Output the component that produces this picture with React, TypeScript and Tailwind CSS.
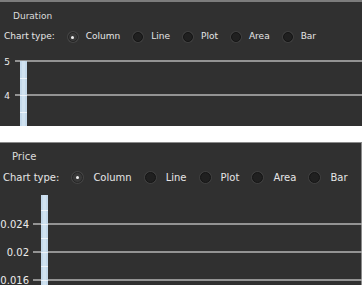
import React from "react";

const types = ["Column", "Line", "Plot", "Area", "Bar"];

function Radio({ checked, size }: { checked?: boolean; size: string }) {
  return (
    <span
      className={`${size} flex items-center justify-center rounded-full border shrink-0 ${
        checked
          ? "border-[#252525] bg-[#393939] shadow-[0_0_0_1px_#444]"
          : "border-[#151515] bg-[#202020] shadow-[0_0_0_1px_#3e3e3e]"
      }`}
    >
      {checked && <span className="w-[3px] h-[3px] rounded-full bg-[#f0f0f0]" />}
    </span>
  );
}

function Chart({
  height,
  labelRight,
  lineStart,
  barX,
  barTop,
  grid,
}: {
  height: number;
  labelRight: number;
  lineStart: number;
  barX: number;
  barTop: number;
  grid: { y: number; label: string }[];
}) {
  const step = grid.length > 1 ? grid[1].y - grid[0].y : 30;
  const stripes: number[] = [];
  for (let y = grid[0].y - step * 2; y < height; y += step / 2) {
    if (y > barTop + 2) stripes.push(Math.round(y));
  }
  return (
    <svg width={362} height={height} className="block">
      {grid.map((g) => (
        <g key={g.label}>
          <line x1={lineStart} x2={362} y1={g.y} y2={g.y} stroke="#b4b4b4" strokeWidth={1.5} />
          <text
            x={labelRight}
            y={g.y + 3.5}
            textAnchor="end"
            fill="#ececec"
            fontSize="inherit"
            fontFamily="'DejaVu Sans', sans-serif"
          >
            {g.label}
          </text>
        </g>
      ))}
      <rect x={barX} y={barTop} width={7} height={height - barTop} fill="#c4d9eb" />
      <rect x={barX + 2} y={barTop} width={3} height={height - barTop} fill="#d0e2f0" />
      {stripes.map((y) => (
        <rect key={y} x={barX} y={y} width={7} height={1} fill="#eef4fa" />
      ))}
    </svg>
  );
}

export default function App() {
  return (
    <div className="w-[362px] h-[285px] bg-white overflow-hidden font-['DejaVu_Sans',sans-serif] text-[#e6e6e6]">
      <section className="h-[126px] bg-[#303030] border-t-2 border-[#7c7c7c] flex flex-col text-[9px]">
        <div className="h-[30px] flex items-center pl-[13px] text-[#dcdcdc]">Duration</div>
        <div className="h-[10px] flex items-center pl-[4px]">
          <span>Chart type:</span>
          {types.map((t, i) => (
            <span key={t} className="flex items-center ml-[13px]">
              <Radio checked={i === 0} size="w-[10px] h-[10px]" />
              <span className="ml-[8px]">{t}</span>
            </span>
          ))}
        </div>
        <Chart
          height={84}
          labelRight={10}
          lineStart={15}
          barX={20}
          barTop={19}
          grid={[
            { y: 19, label: "5" },
            { y: 53, label: "4" },
          ]}
        />
      </section>
      <div className="h-[16px]" />
      <section className="h-[143px] bg-[#303030] border-t border-r border-[#8a8a8a] flex flex-col text-[10px]">
        <div className="h-[26px] flex items-center pl-[12px] text-[#dcdcdc]">Price</div>
        <div className="h-[16px] flex items-center pl-[3px]">
          <span>Chart type:</span>
          {types.map((t, i) => (
            <span key={t} className="flex items-center ml-[13px]">
              <Radio checked={i === 0} size="w-[11px] h-[11px]" />
              <span className="ml-[10px]">{t}</span>
            </span>
          ))}
        </div>
        <Chart
          height={100}
          labelRight={29}
          lineStart={33}
          barX={41}
          barTop={10}
          grid={[
            { y: 39, label: "0.024" },
            { y: 67, label: "0.02" },
            { y: 95, label: "0.016" },
          ]}
        />
      </section>
    </div>
  );
}
